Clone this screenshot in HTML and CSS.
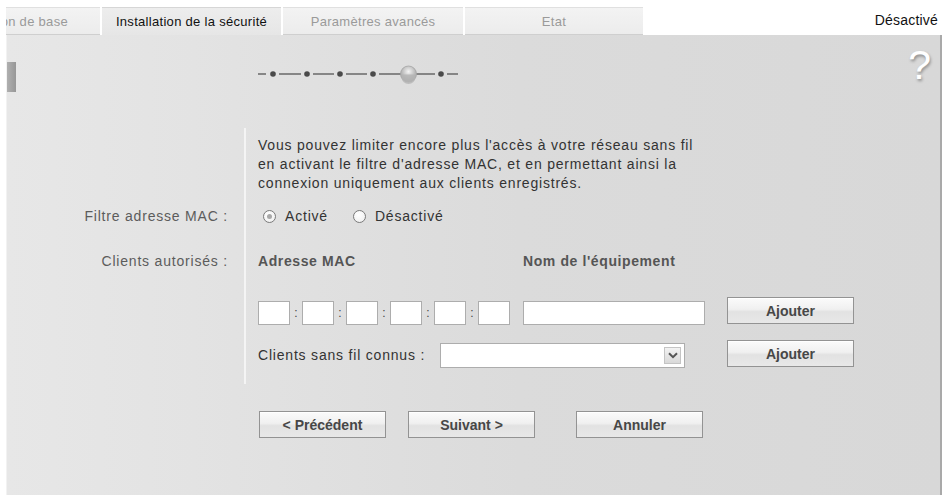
FILE: index.html
```html
<!DOCTYPE html>
<html lang="fr">
<head>
<meta charset="utf-8">
<title>Installation de la sécurité</title>
<link rel="stylesheet" href="styles.css">
</head>
<body>
<div class="topbar">
  <div class="tab tab-first"><span>Configuration de base</span></div>
  <div class="tab tab-active">Installation de la sécurité</div>
  <div class="tab">Paramètres avancés</div>
  <div class="tab tab-last">Etat</div>
  <div class="status">Désactivé</div>
</div>
<div class="panel">
  <div class="panel-head">
    <div class="side-mark"></div>
    <svg class="steps" width="205" height="20" viewBox="0 0 205 20">
      <defs>
        <radialGradient id="ball" cx="0.5" cy="0.35" r="0.7">
          <stop offset="0" stop-color="#f4f4f4"/>
          <stop offset="0.55" stop-color="#bdbdbd"/>
          <stop offset="1" stop-color="#9a9a9a"/>
        </radialGradient>
      </defs>
      <g stroke="#555" stroke-width="1.3">
        <line x1="2" y1="10" x2="10" y2="10"/>
        <line x1="23" y1="10" x2="45" y2="10"/>
        <line x1="57" y1="10" x2="78" y2="10"/>
        <line x1="90" y1="10" x2="111" y2="10"/>
        <line x1="123" y1="10" x2="145" y2="10"/>
        <line x1="160" y1="10" x2="179" y2="10"/>
        <line x1="191" y1="10" x2="202" y2="10"/>
      </g>
      <g fill="#4a4a4a">
        <circle cx="17" cy="10" r="2.8"/>
        <circle cx="51" cy="10" r="2.8"/>
        <circle cx="84" cy="10" r="2.8"/>
        <circle cx="117" cy="10" r="2.8"/>
        <circle cx="185" cy="10" r="2.8"/>
      </g>
      <circle cx="152.5" cy="10" r="8" fill="url(#ball)" stroke="#a5a5a5" stroke-width="0.8"/>
      <path d="M145.5 10.5 H159.5 V13 A7 7 0 0 1 145.5 13 Z" fill="#b4b4b4" opacity="0.8"/>
    </svg>
    <div class="help">?</div>
  </div>

  <div class="form">
    <div class="row r-intro">
      <div class="lbl"></div>
      <div class="cnt">
        <p class="intro">Vous pouvez limiter encore plus l'accès à votre réseau sans fil<br>en activant le filtre d'adresse MAC, et en permettant ainsi la<br>connexion uniquement aux clients enregistrés.</p>
      </div>
    </div>
    <div class="row r-radio">
      <div class="lbl">Filtre adresse MAC :</div>
      <div class="cnt radios">
        <span class="radio checked"></span><span class="rtext">Activé</span>
        <span class="radio"></span><span class="rtext">Désactivé</span>
      </div>
    </div>
    <div class="row r-head">
      <div class="lbl">Clients autorisés :</div>
      <div class="cnt heads">
        <span class="h-mac">Adresse MAC</span>
        <span class="h-name">Nom de l'équipement</span>
      </div>
    </div>
    <div class="row r-mac">
      <div class="lbl"></div>
      <div class="cnt macline">
        <span class="field mac"></span><span class="colon">:</span>
        <span class="field mac"></span><span class="colon">:</span>
        <span class="field mac"></span><span class="colon">:</span>
        <span class="field mac"></span><span class="colon">:</span>
        <span class="field mac"></span><span class="colon">:</span>
        <span class="field mac"></span>
        <span class="field name"></span>
        <button class="btn add">Ajouter</button>
      </div>
    </div>
    <div class="row r-clients">
      <div class="lbl"></div>
      <div class="cnt clientsline">
        <span class="ctext">Clients sans fil connus :</span>
        <span class="select">
          <span class="arrow">
            <svg width="10" height="7" viewBox="0 0 10 7"><path d="M1 1.2 L5 5.2 L9 1.2" fill="none" stroke="#555" stroke-width="2"/></svg>
          </span>
        </span>
        <button class="btn add">Ajouter</button>
      </div>
    </div>
    <div class="row r-nav">
      <div class="lbl"></div>
      <div class="navs">
        <button class="btn">&lt; Précédent</button>
        <button class="btn">Suivant &gt;</button>
        <button class="btn cancel">Annuler</button>
      </div>
    </div>
  </div>
</div>
</body>
</html>
```

FILE: styles.css
```css
html, body {
  margin: 0;
  padding: 0;
  background: #ffffff;
  font-family: "Liberation Sans", Arial, sans-serif;
  overflow: hidden;
}

.topbar {
  display: flex;
  align-items: flex-start;
  height: 35px;
  padding-top: 7px;
  padding-left: 6px;
  box-sizing: border-box;
  gap: 2px;
}

.tab {
  width: 180px;
  height: 28px;
  box-sizing: border-box;
  background: linear-gradient(#f3f3f3, #ececec);
  border-top: 1px solid #e0e0e0;
  border-bottom: 1px solid #cfcfcf;
  color: #9a9a9a;
  font-size: 13px;
  letter-spacing: 0.3px;
  line-height: 27px;
  text-align: center;
  white-space: nowrap;
}

.tab-first {
  width: 94px;
  display: flex;
  justify-content: flex-end;
  overflow: hidden;
  padding-right: 32px;
}

.tab-active {
  width: 179px;
  background: linear-gradient(#ededed, #e6e6e6);
  border-top: 1px solid #d6d6d6;
  border-bottom: none;
  color: #111;
  height: 28px;
}

.tab-last {
  width: 178px;
}

.status {
  margin-left: auto;
  margin-right: 10px;
  margin-top: 5px;
  font-size: 14px;
  letter-spacing: 0.2px;
  color: #111;
}

.panel {
  margin-left: 6px;
  width: 936px;
  height: 470px;
  border-right: 2px solid #a9a9a9;
  border-left: 1px solid #f2f2f2;
  box-sizing: border-box;
  background: linear-gradient(to right, #e7e7e7 0%, #e3e3e3 20%, #dbdbdb 55%, #d8d8d8 100%);
}

.panel-head {
  display: flex;
  align-items: flex-start;
  height: 93px;
}

.side-mark {
  width: 9px;
  height: 30px;
  margin-top: 27px;
  background: linear-gradient(to right, #b0b0b0, #979797);
}

.steps {
  display: block;
  margin-left: 240px;
  margin-top: 29px;
}

.help {
  margin-left: auto;
  margin-right: 9px;
  margin-top: 7px;
  font-size: 41px;
  line-height: 46px;
  color: #ffffff;
  text-shadow: 1px 2px 3px rgba(0, 0, 0, 0.35);
}

.row {
  display: flex;
}

.lbl {
  width: 237px;
  box-sizing: border-box;
  padding-right: 16px;
  text-align: right;
  font-size: 14px;
  letter-spacing: 0.8px;
  line-height: 20px;
  color: #5c5c5c;
}

.cnt {
  border-left: 2px solid #f4f4f4;
  padding-left: 12px;
  flex: 1;
  font-size: 14px;
  letter-spacing: 0.8px;
  color: #333;
}

.r-intro > * { padding-top: 8px; }
.r-radio > * { padding-top: 13px; }
.r-head > * { padding-top: 25px; }
.r-mac > * { padding-top: 26px; }
.r-clients > * { padding-top: 15px; padding-bottom: 16px; }

.intro {
  margin: 0;
  line-height: 19px;
}

.radios {
  display: flex;
  align-items: center;
  height: 20px;
  line-height: 20px;
}

.radio {
  width: 13px;
  height: 13px;
  box-sizing: border-box;
  border: 1px solid #7a7a7a;
  border-radius: 50%;
  background: radial-gradient(circle at 40% 35%, #ffffff, #ececec);
  margin-left: 5px;
  margin-right: 9px;
  display: flex;
  align-items: center;
  justify-content: center;
}

.radio.checked::after {
  content: "";
  width: 5px;
  height: 5px;
  border-radius: 50%;
  background: #a8a8a8;
}

.rtext {
  margin-right: 20px;
}

.heads {
  display: flex;
  line-height: 20px;
  font-weight: bold;
  color: #555;
  letter-spacing: 0.6px;
}

.h-mac {
  width: 265px;
}

.macline {
  display: flex;
  align-items: flex-start;
}

.field {
  display: block;
  height: 24px;
  box-sizing: border-box;
  border: 1px solid #adadad;
  background: #fff;
  margin-top: 4px;
}

.mac {
  width: 32px;
}

.colon {
  width: 12px;
  text-align: center;
  font-size: 12px;
  line-height: 24px;
  margin-top: 4px;
  letter-spacing: 0;
  color: #444;
}

.name {
  width: 182px;
  margin-left: 13px;
}

.btn {
  width: 127px;
  height: 27px;
  box-sizing: border-box;
  border: 1px solid #939393;
  border-radius: 0;
  background: linear-gradient(#fbfbfb 0%, #f0f0f0 45%, #e2e2e2 55%, #e8e8e8 100%);
  box-shadow: inset 0 1px 0 #fff;
  font-family: "Liberation Sans", Arial, sans-serif;
  font-weight: bold;
  font-size: 14px;
  color: #474747;
  padding: 0;
}

.macline .add {
  margin-left: 22px;
}

.clientsline {
  display: flex;
  align-items: flex-start;
}

.ctext {
  width: 182px;
  line-height: 20px;
  margin-top: 5px;
}

.select {
  width: 245px;
  height: 25px;
  margin-top: 3px;
  box-sizing: border-box;
  border: 1px solid #adadad;
  background: #fff;
  display: flex;
  justify-content: flex-end;
  align-items: center;
  padding-right: 3px;
}

.arrow {
  width: 17px;
  height: 17px;
  box-sizing: border-box;
  border: 1px solid #c4c4c4;
  background: linear-gradient(#f2f2f2, #d9d9d9);
  display: flex;
  align-items: center;
  justify-content: center;
}

.clientsline .add {
  margin-left: 42px;
}

.navs {
  display: flex;
  padding-left: 15px;
  padding-top: 27px;
}

.navs .btn + .btn {
  margin-left: 22px;
}

.navs .btn.cancel {
  margin-left: 41px;
}
```
